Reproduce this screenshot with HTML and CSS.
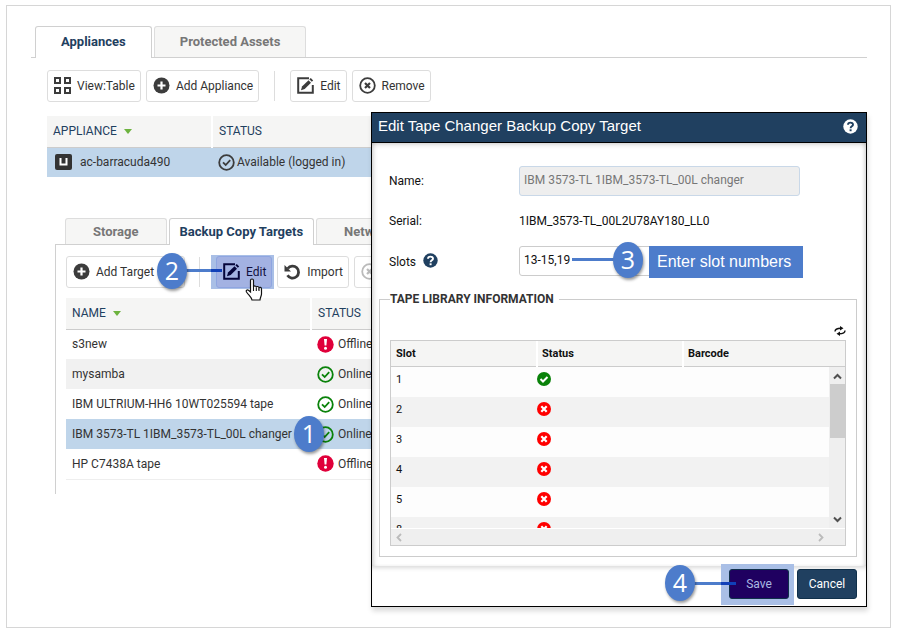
FILE: index.html
```html
<!DOCTYPE html>
<html lang="en">
<head>
    <meta charset="UTF-8">
    <meta name="viewport" content="width=device-width, initial-scale=1.0">
    <title>Edit Tape Changer Backup Copy Target</title>
    <link rel="stylesheet" href="styles.css">
</head>
<body>
    <!-- Shared icons -->
    <svg class="icon-defs" aria-hidden="true">
        <symbol id="i-grid" viewBox="0 0 17 17">
            <path d="M1 1h5v5H1zM11 1h5v5h-5zM1 11h5v5H1zM11 11h5v5h-5z" fill="none" stroke="currentColor" stroke-width="2"/>
        </symbol>
        <symbol id="i-plus" viewBox="0 0 17 17">
            <circle cx="8.500" cy="8.500" r="8" fill="currentColor"/>
            <path d="M8.500 4.500v8M4.500 8.500h8" stroke="#fff" stroke-width="2.200"/>
        </symbol>
        <symbol id="i-edit" viewBox="0 0 17 17">
            <path d="M12 1.200H1.200v14.600h14.600V8" fill="none" stroke="currentColor" stroke-width="2"/>
            <path d="M4 13.200l1-3.700 6.500-6.300 2.500 2.500L7.700 12z" fill="currentColor"/>
            <path d="M12.300 2.300l1.500-1.300 2.400 2.400-1.400 1.400z" fill="currentColor"/>
        </symbol>
        <symbol id="i-remove" viewBox="0 0 17 17">
            <circle cx="8.500" cy="8.500" r="7.300" fill="none" stroke="currentColor" stroke-width="1.800"/>
            <path d="M6 6l5 5M11 6l-5 5" stroke="currentColor" stroke-width="2.200"/>
        </symbol>
        <symbol id="i-import" viewBox="0 0 17 17">
            <path d="M3.800 5.500A6 6 0 1 1 3.500 12.300" fill="none" stroke="currentColor" stroke-width="2.800"/>
            <path d="M0.500 2v6.500H7z" fill="currentColor"/>
        </symbol>
        <symbol id="i-check" viewBox="0 0 17 17">
            <circle cx="8.500" cy="8.500" r="7.300" fill="none" stroke="currentColor" stroke-width="1.800"/>
            <path d="M5 8.300l2.700 2.700 4.500-4.800" fill="none" stroke="currentColor" stroke-width="1.800"/>
        </symbol>
        <symbol id="i-alert" viewBox="0 0 17 17">
            <circle cx="8.500" cy="8.500" r="8.200" fill="currentColor"/>
            <path d="M7 3h3l-.6 6.500H7.600z" fill="#fff"/>
            <circle cx="8.500" cy="12.200" r="1.500" fill="#fff"/>
        </symbol>
        <symbol id="i-ok" viewBox="0 0 14 14">
            <circle cx="7" cy="7" r="7" fill="#0a820a"/>
            <path d="M3.500 7l2.500 2.500 4.500-4.500" fill="none" stroke="#fff" stroke-width="2"/>
        </symbol>
        <symbol id="i-bad" viewBox="0 0 14 14">
            <circle cx="7" cy="7" r="7" fill="#f00"/>
            <path d="M4.300 4.300l5.400 5.400M9.700 4.300L4.300 9.700" stroke="#fff" stroke-width="2.200"/>
        </symbol>
        <symbol id="i-help" viewBox="0 0 15 15">
            <circle cx="7.500" cy="7.500" r="7.200" fill="currentColor" stroke="none"/>
            <path d="M5 5.800C5 2.900 10 2.900 10 5.700 10 7.300 7.600 7.300 7.600 9.200" fill="none" stroke-width="1.900"/>
            <path d="M7.600 10.300v1.900" stroke-width="2"/>
        </symbol>
    </svg>

    <div class="page">
        <nav class="tabs">
            <a href="#" class="tab active">Appliances</a>
            <a href="#" class="tab">Protected Assets</a>
        </nav>

        <div class="content">
            <div class="toolbar">
                <button type="button" class="btn"><svg class="icon"><use href="#i-grid"/></svg>View:Table</button>
                <button type="button" class="btn"><svg class="icon"><use href="#i-plus"/></svg>Add Appliance</button>
                <span class="divider"></span>
                <button type="button" class="btn"><svg class="icon"><use href="#i-edit"/></svg>Edit</button>
                <button type="button" class="btn"><svg class="icon"><use href="#i-remove"/></svg>Remove</button>
            </div>

            <table class="list appliances">
                <thead>
                    <tr><th>APPLIANCE <span class="sort"></span></th><th>STATUS</th></tr>
                </thead>
                <tbody>
                    <tr class="selected">
                        <td>
                            <span class="cell">
                                <svg class="icon unit" viewBox="0 0 17 17"><rect width="17" height="16" rx="2" fill="#333"/><path d="M5.500 4v6.500h6V4" fill="none" stroke="#fff" stroke-width="2"/></svg>
                                ac-barracuda490
                            </span>
                        </td>
                        <td><span class="cell tight"><svg class="icon"><use href="#i-check"/></svg>Available (logged in)</span></td>
                    </tr>
                </tbody>
            </table>
        </div>

        <section class="details">
            <nav class="tabs small">
                <a href="#" class="tab">Storage</a>
                <a href="#" class="tab active">Backup Copy Targets</a>
                <a href="#" class="tab">Network</a>
            </nav>

            <div class="panel">
                <div class="toolbar">
                    <button type="button" class="btn add-target"><svg class="icon"><use href="#i-plus"/></svg>Add Target</button>
                    <span class="divider"></span>
                    <span class="highlight">
                        <button type="button" class="btn"><svg class="icon"><use href="#i-edit"/></svg>Edit</button>
                        <span class="line line-2"></span>
                        <span class="step step-2">2</span>
                        <svg class="cursor" viewBox="0 0 18 24"><path d="M5.500 14V2.500c0-2 3-2 3 0V9c.3-1.500 2.700-1.300 2.800.3.500-1.300 2.600-1 2.700.7.600-1.200 2.500-.8 2.500 1V16c0 2-1.500 3.500-1.500 6H7c-.3-2.500-3-4.500-5.500-8-.8-1.500.6-2.600 2-1.700z" fill="#fff" stroke="#111" stroke-width="1.200"/><path d="M8.500 9v4M11.300 9.500V13M14 10.500V13" stroke="#111" stroke-width="1.100"/></svg>
                    </span>
                    <button type="button" class="btn"><svg class="icon"><use href="#i-import"/></svg>Import</button>
                    <button type="button" class="btn" disabled><svg class="icon"><use href="#i-remove"/></svg></button>
                </div>

                <table class="list targets">
                    <thead>
                        <tr><th>NAME <span class="sort"></span></th><th>STATUS</th></tr>
                    </thead>
                    <tbody>
                        <tr>
                            <td>s3new</td>
                            <td><span class="cell"><svg class="icon offline"><use href="#i-alert"/></svg>Offline</span></td>
                        </tr>
                        <tr>
                            <td>mysamba</td>
                            <td><span class="cell"><svg class="icon online"><use href="#i-check"/></svg>Online</span></td>
                        </tr>
                        <tr>
                            <td>IBM ULTRIUM-HH6 10WT025594 tape</td>
                            <td><span class="cell"><svg class="icon online"><use href="#i-check"/></svg>Online</span></td>
                        </tr>
                        <tr class="selected">
                            <td>IBM 3573-TL 1IBM_3573-TL_00L changer</td>
                            <td><span class="cell"><svg class="icon online"><use href="#i-check"/></svg>Online</span><span class="step step-1">1</span></td>
                        </tr>
                        <tr>
                            <td>HP C7438A tape</td>
                            <td><span class="cell"><svg class="icon offline"><use href="#i-alert"/></svg>Offline</span></td>
                        </tr>
                    </tbody>
                </table>
            </div>
        </section>

        <!-- Edit dialog -->
        <form class="dialog" role="dialog" aria-labelledby="dialogTitle">
            <header class="dialog-header">
                <h1 id="dialogTitle">Edit Tape Changer Backup Copy Target</h1>
                <svg class="help help-light"><use href="#i-help"/></svg>
            </header>

            <div class="dialog-body">
                <div class="field">
                    <label for="name">Name:</label>
                    <input id="name" type="text" value="IBM 3573-TL 1IBM_3573-TL_00L changer" disabled>
                </div>
                <div class="field">
                    <label for="serial">Serial:</label>
                    <output id="serial">1IBM_3573-TL_00L2U78AY180_LL0</output>
                </div>
                <div class="field">
                    <label for="slots">Slots <svg class="help"><use href="#i-help"/></svg></label>
                    <input id="slots" type="text" value="13-15,19">
                    <span class="line line-3"></span>
                    <span class="step step-3">3</span>
                    <span class="note">Enter slot numbers</span>
                </div>

                <fieldset>
                    <legend>TAPE LIBRARY INFORMATION</legend>
                    <div class="tools">
                        <svg class="refresh" viewBox="0 0 12 10"><path d="M1 5.500C1 3 3 2.200 7 2.200M11 4.500C11 7 9 7.800 5 7.800" fill="none" stroke="#111" stroke-width="1.400"/><path d="M6 0l3.500 2.200L6 4.500zM6 5.500L2.500 7.800 6 10z" fill="#111"/></svg>
                    </div>
                    <div class="grid">
                        <table class="slots">
                            <thead>
                                <tr><th>Slot</th><th>Status</th><th>Barcode</th></tr>
                            </thead>
                            <tbody>
                                <tr><td>1</td><td><svg class="state"><use href="#i-ok"/></svg></td><td></td></tr>
                                <tr><td>2</td><td><svg class="state"><use href="#i-bad"/></svg></td><td></td></tr>
                                <tr><td>3</td><td><svg class="state"><use href="#i-bad"/></svg></td><td></td></tr>
                                <tr><td>4</td><td><svg class="state"><use href="#i-bad"/></svg></td><td></td></tr>
                                <tr><td>5</td><td><svg class="state"><use href="#i-bad"/></svg></td><td></td></tr>
                                <tr><td>8</td><td><svg class="state"><use href="#i-bad"/></svg></td><td></td></tr>
                            </tbody>
                        </table>
                        <div class="scroll-y">
                            <svg class="arrow" viewBox="0 0 9 9"><path d="M1 6.500l3.500-3.500L8 6.500" fill="none" stroke="#505050" stroke-width="2"/></svg>
                            <span class="thumb"></span>
                            <svg class="arrow" viewBox="0 0 9 9"><path d="M1 2.500L4.500 6 8 2.500" fill="none" stroke="#505050" stroke-width="2"/></svg>
                        </div>
                        <div class="scroll-x">
                            <svg class="arrow" viewBox="0 0 9 9"><path d="M6 1L2.500 4.500 6 8" fill="none" stroke="#bbb" stroke-width="1.800"/></svg>
                            <svg class="arrow" viewBox="0 0 9 9"><path d="M3 1l3.500 3.500L3 8" fill="none" stroke="#bbb" stroke-width="1.800"/></svg>
                        </div>
                    </div>
                </fieldset>
            </div>

            <footer class="dialog-footer">
                <span class="highlight">
                    <button type="submit" class="action save">Save</button>
                    <span class="line line-4"></span>
                    <span class="step step-4">4</span>
                </span>
                <button type="button" class="action">Cancel</button>
            </footer>
        </form>
    </div>
</body>
</html>
```
FILE: styles.css
```css
* {
    box-sizing: border-box;
}

body {
    margin: 0;
    padding: 5px 21px 8px 6px;
    background: #fff;
    color: #333;
    font-family: Roboto, "Open Sans", sans-serif;
    font-size: 12px;
    line-height: 16px;
}

button,
input {
    font: inherit;
}

.icon-defs {
    display: none;
}

.page {
    position: relative;
    min-height: calc(100vh - 13px);
    padding: 20px 23px 0 24px;
    border: 1px solid #d6d6d6;
}

/* Tabs */
.tabs {
    display: flex;
    gap: 2px;
    padding-left: 4px;
    border-bottom: 1px solid #d0d0d0;
}

.tab {
    height: 31px;
    padding: 7px 25px;
    border: 1px solid #ddd;
    border-bottom: 0;
    border-radius: 3px 3px 0 0;
    background: #f6f6f5;
    color: #777;
    font-size: 13px;
    font-weight: bold;
    text-decoration: none;
    white-space: nowrap;
}

.tab.active {
    margin-bottom: -1px;
    height: 32px;
    border-color: #d0d0d0;
    background: #fff;
    color: #1f4060;
}

.small {
    padding-left: 10px;
}

.small .tab {
    height: 26px;
    padding: 5px 27px;
}

.small .tab.active {
    height: 27px;
    padding: 5px 10px;
}

/* Toolbars */
.content {
    padding: 12px 0 0 16px;
}

.toolbar {
    display: flex;
    align-items: center;
    gap: 5px;
}

.btn {
    display: flex;
    align-items: center;
    gap: 6px;
    height: 32px;
    padding: 0 5px 1px 6px;
    border: 1px solid #ddd;
    border-radius: 3px;
    background: #fff;
    color: #333;
    white-space: nowrap;
}

.icon {
    flex: none;
    width: 17px;
    height: 17px;
    color: #3c3c3c;
}

.btn:disabled .icon {
    color: #bbb;
}

.divider {
    width: 1px;
    height: 30px;
    margin: 0 10px;
    background: #ddd;
}

/* Lists */
.list {
    width: 100%;
    border-collapse: collapse;
    table-layout: fixed;
}

.list th {
    height: 31px;
    padding: 0 6px;
    border-bottom: 1px solid #ccc;
    background: #f5f5f4;
    color: #1f4060;
    font-weight: normal;
    text-align: left;
}

.list th + th {
    border-left: 2px solid #fff;
}

.list td {
    position: relative;
    height: 30px;
    padding: 0 6px;
    white-space: nowrap;
}

.appliances {
    margin-top: 14px;
}

.appliances th:first-child {
    width: 165px;
}

.list .selected {
    background: #bfd5ea;
}

.sort {
    display: inline-block;
    margin-left: 4px;
    border: 4px solid transparent;
    border-top: 5px solid #6db33f;
    border-bottom: 0;
    vertical-align: 1px;
}

.cell {
    display: flex;
    align-items: center;
    gap: 4px;
}

.unit {
    margin: 0 4px 0 2px;
}

.tight {
    gap: 2px;
}

.details {
    padding: 41px 0 0 24px;
}

.panel {
    padding: 10px 0 14px 10px;
    border-left: 1px solid #d0d0d0;
}

.add-target {
    width: 119px;
}

.panel .divider {
    margin: 0 6px 0 9px;
}

.targets {
    margin-top: 9px;
    border-bottom: 1px solid #eee;
}

.targets th:first-child {
    width: 245px;
}

.targets tbody tr:nth-child(even):not(.selected) {
    background: #f1f1f1;
}

.offline {
    color: #e0003a;
}

.online {
    color: #0a820a;
}

/* Step callouts */
.highlight {
    position: relative;
    padding: 1px 2px 1px 5px;
    background: #a9bfe6;
}

.toolbar .highlight {
    margin-right: -2px;
}

.highlight .btn {
    border-color: #8fa5e0;
    background: #a3b2e2;
    color: #101040;
}

.highlight .icon {
    color: #05053a;
}

.step {
    position: absolute;
    z-index: 2;
    width: 30px;
    height: 36px;
    border-radius: 50%;
    background: #4d7ccb;
    box-shadow: 1px 2px 3px rgba(0, 0, 0, 0.4);
    color: #fff;
    font-family: "Open Sans", sans-serif;
    font-size: 25px;
    line-height: 35px;
    text-align: center;
}

.line {
    position: absolute;
    z-index: 1;
    height: 3px;
    background: #4d7ccb;
}

.step-1 {
    left: -17px;
    top: -3px;
}

.step-2 {
    left: -54px;
    top: -2px;
}

.line-2 {
    left: -26px;
    top: 14px;
    width: 37px;
    background: linear-gradient(to right, #4d7ccb 26px, #1040b8 26px);
}

.cursor {
    position: absolute;
    left: 34px;
    top: 23px;
    z-index: 2;
    width: 18px;
    height: 24px;
}

.step-3 {
    left: 224px;
    top: -4px;
}

.line-3 {
    left: 183px;
    top: 12px;
    width: 43px;
}

.note {
    position: absolute;
    left: 260px;
    top: 0;
    padding: 8px 12px 8px 8px;
    background: #4d7ccb;
    color: #fff;
    font-family: "Liberation Sans", sans-serif;
    font-size: 16px;
    white-space: nowrap;
}

.step-4 {
    left: -56px;
    top: 1px;
}

.line-4 {
    left: -27px;
    top: 18px;
    width: 42px;
    background: linear-gradient(to right, #4d7ccb 27px, #1040b8 27px);
}

/* Dialog */
.dialog {
    position: absolute;
    top: 106px;
    right: 23px;
    z-index: 3;
    width: 496px;
    border: 1px solid #000;
    background: #fff;
    box-shadow: 1px 4px 5px rgba(0, 0, 0, 0.15);
    color: #111;
}

.dialog-header {
    display: flex;
    align-items: center;
    justify-content: space-between;
    height: 30px;
    padding: 0 8px 3px 6px;
    border-bottom: 1px solid #000;
    background: #204060;
}

.dialog-header h1 {
    margin: 0;
    color: #fff;
    font-family: "Liberation Sans", sans-serif;
    font-size: 15px;
    font-weight: normal;
}

.help {
    width: 15px;
    height: 15px;
    margin-left: 4px;
    color: #204060;
    stroke: #fff;
    vertical-align: -2px;
}

.help-light {
    color: #fff;
    stroke: #204060;
}

.dialog-body {
    padding: 23px 9px 9px 7px;
    box-shadow: inset 0 4px 5px -2px rgba(0, 0, 0, 0.15), inset 4px 0 4px -2px rgba(0, 0, 0, 0.15), inset -4px 0 4px -2px rgba(0, 0, 0, 0.15);
}

.field {
    position: relative;
    display: flex;
    align-items: center;
    height: 30px;
    margin: 0 0 10px 10px;
}

.field label {
    flex: none;
    width: 130px;
}

.field input {
    width: 281px;
    height: 30px;
    padding: 0 4px 2px;
    border: 1px solid #ccc;
    border-radius: 3px;
    background: #fff;
    color: #111;
}

.field input:disabled {
    border-color: #c9d8e8;
    background: #eee;
    color: #777;
}

fieldset {
    margin: 0;
    padding: 0 10px 10px;
    border: 1px solid #ccc;
}

.field + fieldset {
    margin-top: 15px;
}

legend {
    padding: 0 5px 0 0;
    color: #333;
    font-weight: bold;
}

.tools {
    display: flex;
    justify-content: flex-end;
    height: 33px;
    padding-top: 19px;
}

.refresh {
    width: 12px;
    height: 10px;
}

.grid {
    position: relative;
    height: 206px;
    overflow: hidden;
    border: 1px solid #ccc;
}

.slots {
    width: 100%;
    border-collapse: collapse;
    table-layout: fixed;
    font-size: 11px;
}

.slots th {
    height: 25px;
    padding: 1px 5px 0 4px;
    border-bottom: 1px solid #ccc;
    background: #f5f5f4;
    font-weight: bold;
    text-align: left;
}

.slots th:first-child {
    padding-left: 5px;
}

.slots th + th {
    border-left: 2px solid #fff;
}

.slots th:not(:last-child) {
    width: 146px;
}

.slots td {
    height: 30px;
    padding: 5px 5px 0;
    vertical-align: top;
}

.slots td + td {
    padding: 5px 0 0;
}

.slots tbody tr {
    background: #fdfdfd;
}

.slots tbody tr:first-child td {
    height: 31px;
}

.slots tbody tr:nth-child(even) {
    background: #f2f2f2;
}

.state {
    display: block;
    width: 14px;
    height: 14px;
}

.scroll-y {
    position: absolute;
    top: 26px;
    right: 0;
    bottom: 16px;
    display: flex;
    flex-direction: column;
    align-items: center;
    width: 16px;
    padding: 5px 0;
    background: #efefef;
}

.scroll-y .thumb {
    width: 15px;
    height: 54px;
    margin: 3px 0 auto;
    background: #cdcdcd;
}

.scroll-x {
    position: absolute;
    right: 0;
    bottom: 0;
    left: 0;
    display: flex;
    align-items: center;
    justify-content: space-between;
    height: 17px;
    padding: 0 20px 0 4px;
    border-top: 1px solid #fff;
    background: #efefef;
}

.arrow {
    width: 9px;
    height: 9px;
}

.dialog-footer {
    display: flex;
    justify-content: flex-end;
    align-items: flex-start;
    gap: 3px;
    height: 40px;
    padding-right: 9px;
    box-shadow: inset 0 4px 4px -2px rgba(0, 0, 0, 0.15);
}

.dialog-footer .highlight {
    margin-top: -2px;
    padding: 5px 5px 6px 8px;
}

.action {
    display: block;
    width: 60px;
    height: 30px;
    margin-top: 3px;
    padding: 0;
    border: 1px solid #10304a;
    border-radius: 3px;
    background: #204060;
    color: #fff;
}

.action.save {
    margin-top: 0;
    background: #1f0060;
    color: #a9b9e2;
}
```
